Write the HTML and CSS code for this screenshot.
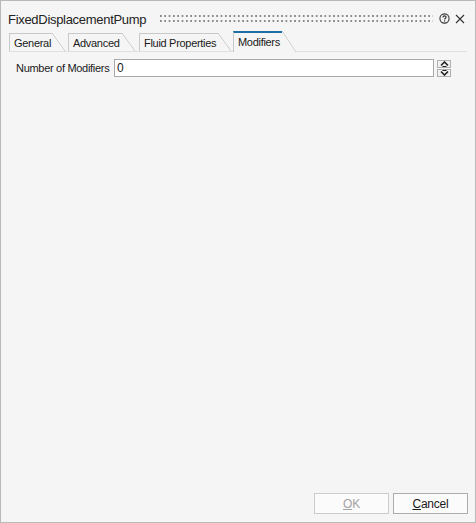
FILE: index.html
```html
<!DOCTYPE html>
<html>
<head>
<meta charset="utf-8">
<link rel="stylesheet" href="styles.css">
</head>
<body>
<div class="window">
  <div class="titlebar">
    <span class="title">FixedDisplacementPump</span>
    <span class="grip"></span>
    <svg class="help" width="11" height="11" viewBox="0 0 11 11"><circle cx="5.5" cy="5.5" r="4.6" fill="none" stroke="#333" stroke-width="1.1"/><path d="M3.9 4.4 C3.9 3.3 4.6 2.9 5.5 2.9 C6.4 2.9 7.1 3.4 7.1 4.2 C7.1 5.2 5.6 5.3 5.6 6.4" fill="none" stroke="#333" stroke-width="1.1"/><rect x="5" y="7.3" width="1.2" height="1.2" fill="#333"/></svg>
    <svg class="close" width="10" height="10" viewBox="0 0 10 10"><path d="M1 1 L9 9 M9 1 L1 9" stroke="#333" stroke-width="1.1"/></svg>
  </div>
  <div class="tabs">
    <div class="tab t1"><span class="lbl">General</span><span class="slant"></span></div>
    <div class="tab t2"><span class="lbl">Advanced</span><span class="slant"></span></div>
    <div class="tab t3"><span class="lbl">Fluid Properties</span><span class="slant"></span></div>
    <div class="tab t4 active"><span class="lbl">Modifiers</span><span class="slant"></span></div>
    <div class="tabfill"></div>
  </div>
  <div class="content">
    <div class="row">
      <label class="label">Number of Modifiers</label>
      <div class="input">0</div>
      <div class="spin">
        <div class="sbtn"><svg width="9" height="6" viewBox="0 0 9 6"><path d="M1 4.5 L4.5 1 L8 4.5" fill="none" stroke="#222" stroke-width="1.6"/><path d="M2.5 5.5 H6.5" stroke="#222" stroke-width="1"/></svg></div>
        <div class="sbtn"><svg width="9" height="6" viewBox="0 0 9 6"><path d="M2.5 0.5 H6.5" stroke="#222" stroke-width="1"/><path d="M1 1.5 L4.5 5 L8 1.5" fill="none" stroke="#222" stroke-width="1.6"/></svg></div>
      </div>
    </div>
  </div>
  <div class="footer">
    <button class="btn disabled"><u>O</u>K</button>
    <button class="btn"><u>C</u>ancel</button>
  </div>
</div>
</body>
</html>
```
FILE: styles.css
```css
html, body {
  margin: 0;
  padding: 0;
}
body {
  font-family: "Liberation Sans", Arial, sans-serif;
  font-size: 11px;
  letter-spacing: -0.3px;
  color: #1a1a1a;
}
.window {
  width: 476px;
  height: 523px;
  box-sizing: border-box;
  border: 1px solid #b9b9b9;
  background: #f5f5f5;
  display: flex;
  flex-direction: column;
}
.titlebar {
  height: 30px;
  display: flex;
  align-items: center;
  padding: 0 10px 0 7px;
}
.title {
  font-size: 13px;
  letter-spacing: -0.3px;
  color: #222;
  padding-top: 6px;
}
.grip {
  flex: 1;
  height: 7px;
  margin: 5px 6px 0 14px;
  background-image: radial-gradient(circle at 1px 1px, #8a8a8a 0.95px, transparent 1.05px);
  background-size: 4.33px 5px;
  background-position: 0 0;
}
.help {
  margin-top: 5px;
  margin-right: 5px;
}
.close {
  margin-top: 5px;
}
.tabs {
  display: flex;
  align-items: flex-end;
  height: 21px;
  margin: 0 8px 0 8px;
}
.tab {
  display: flex;
  height: 19px;
  box-sizing: border-box;
}
.tab .lbl {
  border-top: 1px solid #c9c9c9;
  border-left: 1px solid #c9c9c9;
  padding: 3px 0 0 4px;
  box-sizing: border-box;
  white-space: nowrap;
  color: #1a1a1a;
}
.tab .slant {
  width: 13px;
  background: linear-gradient(to top right, transparent calc(50% - 0.7px), #c9c9c9 50%, transparent calc(50% + 0.7px));
}
.t1, .t2, .t3 { border-bottom: 1px solid #e0e0e0; }
.t1 { padding-right: 3px; }
.t1 .lbl { width: 43px; }
.t2 { padding-right: 4px; }
.t2 .lbl { width: 54px; }
.t3 { padding-right: 2px; }
.t3 .lbl { width: 79px; }
.tab.active {
  height: 21px;
}
.tab.active .lbl {
  border-top: 2px solid #1c6ea4;
  width: 49px;
  padding-top: 3px;
}
.tab.active .slant {
  width: 14px;
}
.tabfill {
  flex: 1;
  border-bottom: 1px solid #e0e0e0;
  height: 0;
}
.content {
  flex: 1;
  padding: 7px 8px 0 15px;
}
.row {
  display: flex;
  align-items: center;
  height: 18px;
}
.label {
  width: 98px;
  white-space: nowrap;
}
.input {
  width: 320px;
  height: 18px;
  box-sizing: border-box;
  border: 1px solid #a9a9a9;
  background: #fff;
  padding: 1px 0 0 2px;
  font-size: 12px;
  color: #1a1a1a;
}
.spin {
  margin-left: 3px;
  display: flex;
  flex-direction: column;
  gap: 1px;
}
.sbtn {
  width: 14px;
  height: 8px;
  box-sizing: border-box;
  border: 1px solid #b0b0b0;
  background: #f2f2f2;
  display: flex;
  align-items: center;
  justify-content: center;
}
.sbtn svg { display: block; }
.footer {
  display: flex;
  justify-content: flex-end;
  gap: 4px;
  padding: 0 7px 8px 0;
}
.btn {
  width: 75px;
  height: 21px;
  box-sizing: border-box;
  border: 1px solid #adadad;
  background: #fbfbfb;
  font-family: "Liberation Sans", Arial, sans-serif;
  font-size: 12px;
  letter-spacing: -0.2px;
  color: #1a1a1a;
  padding: 0;
}
.btn.disabled {
  border-color: #cccccc;
  color: #a3a3a3;
}
```
